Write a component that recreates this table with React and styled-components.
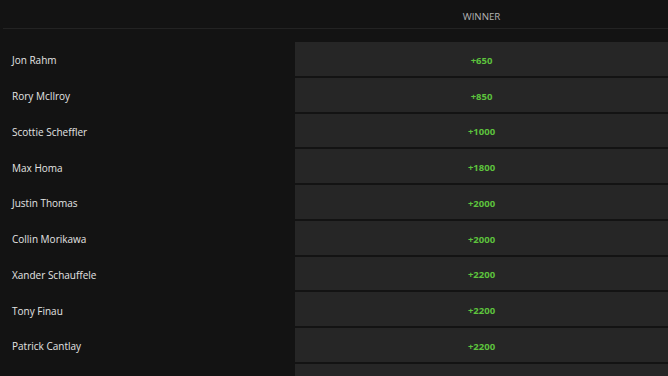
import React from 'react';
import styled, { createGlobalStyle } from 'styled-components';

const GlobalStyle = createGlobalStyle`
  html, body {
    margin: 0;
    padding: 0;
    background: #131313;
    font-family: 'Open Sans', 'Liberation Sans', sans-serif;
    overflow: hidden;
  }
`;

const Page = styled.div`
  width: 668px;
  height: 376px;
  overflow: hidden;
  background: #131313;
`;

const Header = styled.div`
  display: grid;
  grid-template-columns: 295px 1fr;
  height: 28px;
  margin-left: 3px;
  border-bottom: 1px solid #232323;
`;

const HeaderLabel = styled.div`
  display: flex;
  align-items: center;
  justify-content: center;
  margin-left: -3px;
  padding-top: 4px;
  font-size: 9.7px;
  color: #b4b4b4;
`;

const Rows = styled.div`
  display: grid;
  grid-auto-rows: 33.75px;
  row-gap: 2px;
  padding-top: 13px;
`;

const Row = styled.div`
  display: grid;
  grid-template-columns: 295px 1fr;
`;

const Name = styled.div`
  display: flex;
  align-items: center;
  padding-left: 12px;
  padding-top: 3px;
  font-size: 10px;
  color: #e4e4e4;
`;

const Odds = styled.div`
  display: flex;
  align-items: center;
  justify-content: center;
  padding-top: 3px;
  background: #262626;
  font-size: 9.5px;
  font-weight: 700;
  color: #5dc33d;
`;

const players = [
  ['Jon Rahm', '+650'],
  ['Rory McIlroy', '+850'],
  ['Scottie Scheffler', '+1000'],
  ['Max Homa', '+1800'],
  ['Justin Thomas', '+2000'],
  ['Collin Morikawa', '+2000'],
  ['Xander Schauffele', '+2200'],
  ['Tony Finau', '+2200'],
  ['Patrick Cantlay', '+2200'],
  ['', ''],
];

const App = () => (
  <Page>
    <GlobalStyle />
    <Header>
      <div />
      <HeaderLabel>WINNER</HeaderLabel>
    </Header>
    <Rows>
      {players.map(([name, odds], i) => (
        <Row key={i}>
          <Name>{name}</Name>
          <Odds>{odds}</Odds>
        </Row>
      ))}
    </Rows>
  </Page>
);

export default App;
